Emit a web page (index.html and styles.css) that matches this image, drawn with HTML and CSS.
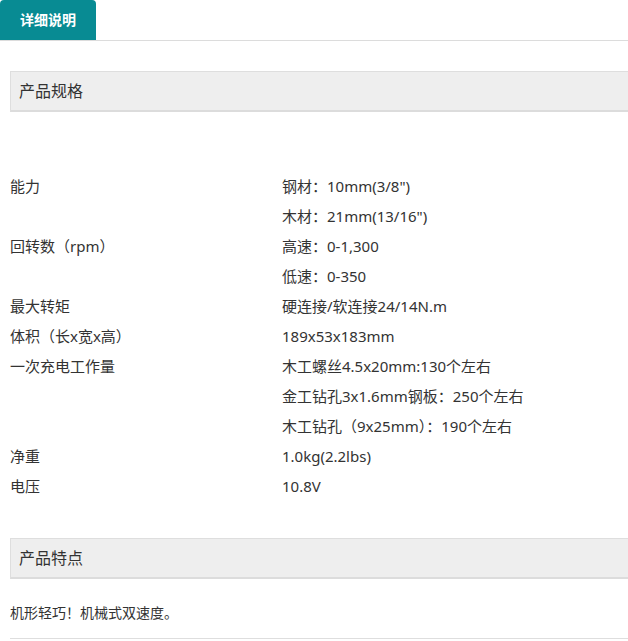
FILE: index.html
```html
<!DOCTYPE html>
<html lang="zh-CN">
<head>
<meta charset="utf-8">
<link rel="stylesheet" href="styles.css">
</head>
<body>
<div class="page">
  <div class="tabs">
    <div class="tab">详细说明</div>
  </div>
  <div class="content">
    <div class="section-head">产品规格</div>
    <div class="specs">
      <div class="row"><div class="k">能力</div><div class="v"><div>钢材：10mm(3/8")</div><div>木材：21mm(13/16")</div></div></div>
      <div class="row"><div class="k">回转数（rpm）</div><div class="v"><div>高速：0-1,300</div><div>低速：0-350</div></div></div>
      <div class="row"><div class="k">最大转矩</div><div class="v"><div>硬连接/软连接24/14N.m</div></div></div>
      <div class="row"><div class="k">体积（长x宽x高）</div><div class="v"><div>189x53x183mm</div></div></div>
      <div class="row"><div class="k">一次充电工作量</div><div class="v"><div>木工螺丝4.5x20mm:130个左右</div><div>金工钻孔3x1.6mm钢板：250个左右</div><div>木工钻孔（9x25mm）：190个左右</div></div></div>
      <div class="row"><div class="k">净重</div><div class="v"><div>1.0kg(2.2lbs)</div></div></div>
      <div class="row"><div class="k">电压</div><div class="v"><div>10.8V</div></div></div>
    </div>
    <div class="section-head second">产品特点</div>
    <p class="feature">机形轻巧！机械式双速度。</p>
    <div class="rule"></div>
  </div>
</div>
</body>
</html>
```

FILE: styles.css
```css
html, body {
  margin: 0;
  padding: 0;
  background: #fff;
  overflow: hidden;
}
body {
  font-family: "Noto Sans", "Noto Sans CJK SC", sans-serif;
  color: #333;
  font-size: 15px;
}
.page {
  width: 628px;
  overflow: hidden;
}
.tabs {
  height: 40px;
  border-bottom: 1px solid #dcdcdc;
  display: flex;
}
.tab {
  width: 96px;
  height: 40px;
  background: #088b93;
  color: #fff;
  font-weight: bold;
  font-size: 14px;
  line-height: 40px;
  text-align: center;
  border-radius: 4px 4px 0 0;
}
.content {
  padding-left: 10px;
}
.section-head {
  margin-top: 30px;
  margin-right: -20px;
  height: 38px;
  line-height: 38px;
  background: #eeeeee;
  border: 1px solid #dedede;
  border-bottom: 2px solid #dcdcdc;
  padding-left: 8px;
  font-size: 16px;
  color: #333;
}
.section-head.second {
  margin-top: 37px;
}
.specs {
  margin-top: 59px;
}
.row {
  display: flex;
  line-height: 30px;
}
.k {
  width: 272px;
  flex: none;
}
.v {
  flex: 1;
}
.feature {
  margin: 19px 0 0;
  line-height: 30px;
  font-size: 14px;
}
.rule {
  margin-top: 10px;
  border-top: 1px solid #dedede;
  margin-right: -20px;
}
```
